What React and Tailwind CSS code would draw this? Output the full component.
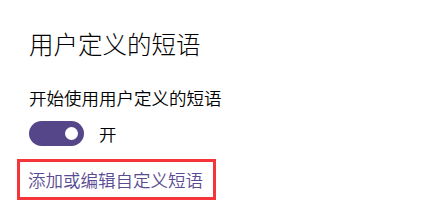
export default function App() {
  const font = { fontFamily: '"Noto Sans CJK SC", "Noto Sans", sans-serif' };
  return (
    <div className="w-[432px] h-[213px] bg-white overflow-hidden" style={font}>
      <div className="pl-[29px] pt-[29px] flex flex-col items-start">
        <div className="text-[24.5px] leading-[30px] text-black font-light">用户定义的短语</div>
        <div className="mt-[28px] text-[17.5px] leading-[22px] text-black font-[350]">开始使用用户定义的短语</div>
        <div className="mt-[12px] flex items-center gap-[15px]">
          <div className="w-[55px] h-[25px] rounded-full bg-[#554689] flex items-center justify-end pr-[6px]">
            <div className="w-[13px] h-[13px] rounded-full bg-white" />
          </div>
          <div className="text-[17.5px] leading-[22px] text-black font-[350]">开</div>
        </div>
      </div>
      <div className="ml-[17px] mt-[13px] w-[199px] h-[41px] border-[3px] border-[#f5353a] flex items-center pl-[8px]">
        <span className="text-[17.5px] leading-[22px] text-[#5a4c94] font-[350]">添加或编辑自定义短语</span>
      </div>
    </div>
  );
}
